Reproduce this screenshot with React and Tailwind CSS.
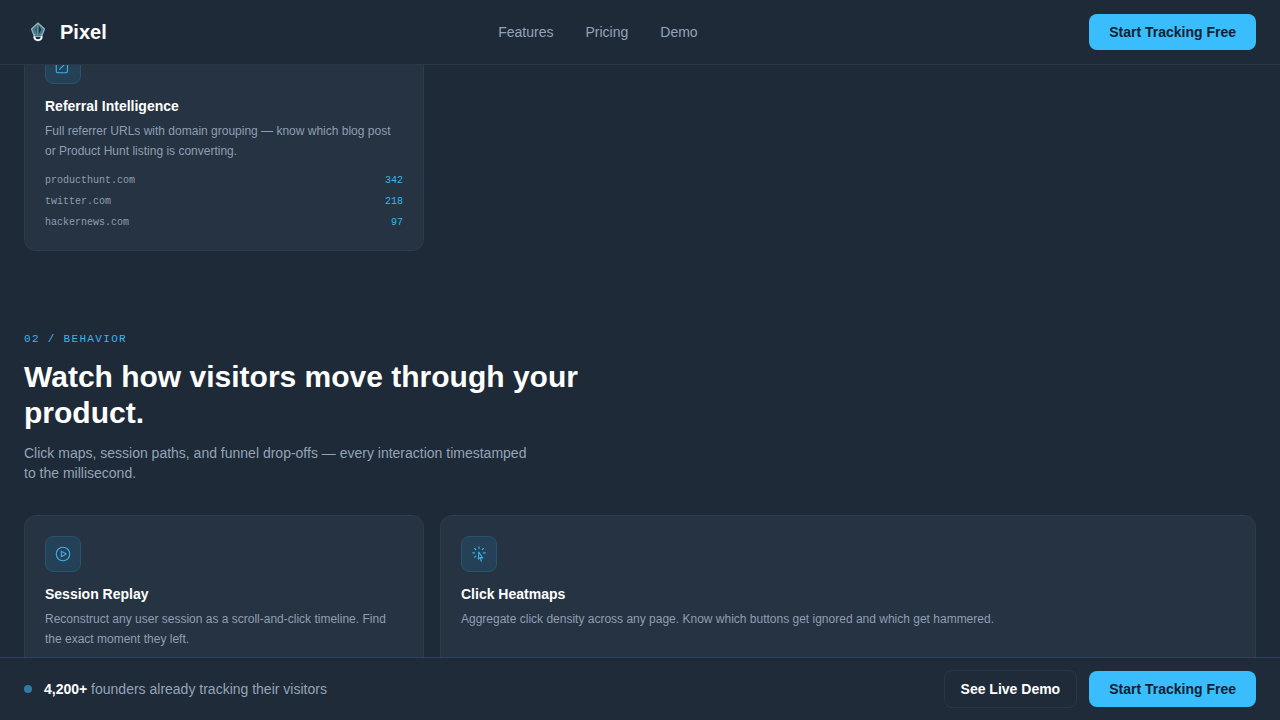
import {
  HiOutlineArrowTopRightOnSquare,
  HiOutlineCursorArrowRays,
  HiOutlinePlayCircle,
} from 'react-icons/hi2';

const referrers = [
  { domain: 'producthunt.com', visits: 342 },
  { domain: 'twitter.com', visits: 218 },
  { domain: 'hackernews.com', visits: 97 },
];

function Logo() {
  return (
    <svg className="h-7 w-7" viewBox="0 0 28 28" fill="none" aria-hidden="true">
      <path d="M14 5 20.5 11 19 15 17.500 18.500h-7L9 15 7.500 11Z" fill="#4d7b8a" stroke="#8ab4bf" strokeWidth="1.2" strokeLinejoin="round" />
      <path d="M14 6.500 17.500 11.500 14 17.500Z" fill="#1b3646" />
      <path d="M14 6.500 10.500 11.500 14 17.500Z" fill="#356274" />
      <path d="M14 6v11" stroke="#9cc3cc" strokeWidth="0.8" />
      <path d="M9.500 16.500h2M16.500 16.500h2" stroke="#8ab4bf" strokeWidth="1.2" />
      <path d="M10.300 19c.4 4.300 7 4.300 7.400 0" stroke="#f1fbfb" strokeWidth="2" strokeLinecap="round" />
    </svg>
  );
}

function PrimaryButton({ children }) {
  return (
    <button type="button" className="h-9 rounded-lg bg-[#3abdfc] px-5 text-sm font-bold text-[#0f1f33]">
      {children}
    </button>
  );
}

function FeatureCard({ icon: Icon, title, description, className = '', children }) {
  return (
    <article className={`rounded-xl border border-[#2d3d4c] bg-[#263342] p-5 ${className}`}>
      <div className="flex h-9 w-9 items-center justify-center rounded-lg border border-[#28546b] bg-[#254157] text-[#3cb0e6]">
        <Icon className="h-[18px] w-[18px]" aria-hidden="true" />
      </div>
      <h3 className="mt-3 text-sm font-bold text-white">{title}</h3>
      <p className="mt-1.5 text-xs leading-relaxed text-[#8f9eb2]">{description}</p>
      {children}
    </article>
  );
}

export default function App() {
  return (
    <div className="flex h-screen flex-col overflow-hidden bg-[#1e2a37] font-['Liberation_Sans',Arial,sans-serif] text-white">
      <header className="relative z-10 shrink-0 border-b border-[#2b3844] bg-[#1f2a39]">
        <div className="flex h-16 items-center justify-between px-6">
          <a href="#" className="flex items-center gap-2 text-xl font-bold">
            <Logo />
            Pixel
          </a>
          <nav className="flex gap-8 text-sm text-[#94a3b8]">
            <a href="#features">Features</a>
            <a href="#pricing">Pricing</a>
            <a href="#demo">Demo</a>
          </nav>
          <PrimaryButton>Start Tracking Free</PrimaryButton>
        </div>
      </header>

      <main className="min-h-0 flex-1 overflow-hidden px-6">
        <div className="-mt-[38px] grid grid-cols-3 gap-4">
          <FeatureCard
            icon={HiOutlineArrowTopRightOnSquare}
            title="Referral Intelligence"
            description="Full referrer URLs with domain grouping — know which blog post or Product Hunt listing is converting."
          >
            <ul className="mt-3 flex flex-col gap-1.5 font-['Liberation_Mono',monospace] text-[10px] leading-[15px]">
              {referrers.map(({ domain, visits }) => (
                <li key={domain} className="flex justify-between">
                  <span className="text-[#8f9eb2]">{domain}</span>
                  <span className="text-[#3cb4ec]">{visits}</span>
                </li>
              ))}
            </ul>
          </FeatureCard>
        </div>

        <section id="features" className="pt-20">
          <p className="font-['Liberation_Mono',monospace] text-[11px] leading-4 tracking-[0.12em] text-[#38b6f0]">
            02 / BEHAVIOR
          </p>
          <h2 className="mt-3 max-w-xl text-3xl leading-9 font-bold">
            Watch how visitors move through your product.
          </h2>
          <p className="mt-3 max-w-lg text-sm text-[#94a3b8]">
            Click maps, session paths, and funnel drop-offs — every interaction timestamped to the millisecond.
          </p>
          <div className="mt-8 grid grid-cols-3 gap-4 pb-20">
            <FeatureCard
              icon={HiOutlinePlayCircle}
              title="Session Replay"
              description="Reconstruct any user session as a scroll-and-click timeline. Find the exact moment they left."
              className="pb-12"
            />
            <FeatureCard
              icon={HiOutlineCursorArrowRays}
              title="Click Heatmaps"
              description="Aggregate click density across any page. Know which buttons get ignored and which get hammered."
              className="col-span-2"
            />
          </div>
        </section>
      </main>

      <footer className="relative z-10 flex shrink-0 items-center justify-between border-t border-[#25465b] bg-[#1f2b38] px-6 py-3">
        <div className="flex items-center gap-3 text-sm text-[#94a3b8]">
          <span className="h-2 w-2 rounded-full bg-[#2d7ca6]" />
          <p>
            <strong className="font-bold text-white">4,200+</strong> founders already tracking their visitors
          </p>
        </div>
        <div className="flex items-center gap-3">
          <button type="button" className="h-[38px] rounded-lg border border-[#2b3844] px-4 text-sm font-bold">
            See Live Demo
          </button>
          <PrimaryButton>Start Tracking Free</PrimaryButton>
        </div>
      </footer>
    </div>
  );
}
